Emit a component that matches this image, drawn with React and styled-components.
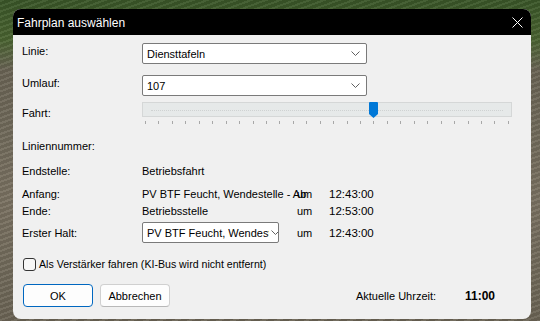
import React from "react";
import styled, { createGlobalStyle } from "styled-components";

const Global = createGlobalStyle`
  html, body { margin: 0; padding: 0; }
  body {
    width: 540px;
    height: 321px;
    overflow: hidden;
    font-family: "Liberation Sans", Arial, sans-serif;
    background:
      repeating-linear-gradient(160deg, rgba(255,255,255,0.06) 0 2px, rgba(0,0,0,0.08) 2px 5px),
      linear-gradient(to bottom, #3a5628 0px, #4a6431 40px, #6a6455 70px, #7a7262 200px, #6b6455 321px);
  }
`;

const Dialog = styled.div`
  margin: 9px 0 0 13px;
  width: 518px;
  height: 310px;
  border-radius: 8px;
  overflow: hidden;
  background: #f0f0f0;
  display: flex;
  flex-direction: column;
  color: #000;
  font-size: 11px;
`;

const TitleBar = styled.div`
  height: 26px;
  background: #000;
  display: flex;
  align-items: center;
  justify-content: space-between;
  padding: 0 8px 0 4px;
  flex-shrink: 0;
`;

const Title = styled.span`
  color: #fff;
  font-size: 12px;
  line-height: 26px;
  padding-top: 1px;
`;

const Body = styled.div`
  padding: 8px 9px 0 9px;
  display: flex;
  flex-direction: column;
`;

const Row = styled.div`
  display: flex;
  align-items: ${(p) => p.$align || "center"};
  margin-top: ${(p) => p.$mt || 0}px;
  height: ${(p) => (p.$h ? `${p.$h}px` : "auto")};
`;

const Label = styled.div`
  width: 120px;
  flex-shrink: 0;
  line-height: 14px;
  padding-top: ${(p) => p.$pt || 0}px;
  white-space: nowrap;
`;

const Combo = styled.div`
  width: ${(p) => p.$w}px;
  height: 21px;
  box-sizing: border-box;
  border: 1px solid #7a7a7a;
  border-radius: 2px;
  background: #fff;
  display: flex;
  align-items: center;
  padding: 0 0 0 4px;
  font-size: 11px;
  overflow: hidden;
`;

const ComboText = styled.span`
  flex: 1;
  white-space: nowrap;
  overflow: hidden;
  padding-top: 1px;
`;

const Chevron = styled.svg`
  flex-shrink: 0;
  margin: 0 ${(p) => p.$mr}px 0 2px;
`;

const SliderWrap = styled.div`
  width: 370px;
  display: flex;
  flex-direction: column;
  position: relative;
`;

const Track = styled.div`
  height: 15px;
  box-sizing: border-box;
  border: 1px solid #d5d7d7;
  background: #e6e9e9;
  display: flex;
  align-items: center;
  padding: 0 8px;
`;

const DotLine = styled.div`
  flex: 1;
  border-top: 1px dotted #cfd2d2;
  margin-top: 2px;
`;

const Thumb = styled.svg`
  position: absolute;
  top: 0;
  left: 227px;
`;

const Ticks = styled.div`
  display: flex;
  justify-content: space-between;
  padding: 0 3px 0 3px;
  margin-top: 4px;
  height: 3px;
`;

const Tick = styled.span`
  width: 1px;
  height: 3px;
  background: #a8a8a8;
`;

const Value = styled.div`
  width: 155px;
  flex-shrink: 0;
  line-height: 14px;
  white-space: nowrap;
`;

const Clip = styled.span`
  display: block;
  width: 165px;
  overflow: hidden;
  white-space: nowrap;
`;

const Um = styled.div`
  width: 32px;
  flex-shrink: 0;
  line-height: 14px;
  position: relative;
`;

const Time = styled.div`
  line-height: 14px;
  font-size: 11.5px;
`;

const CheckRow = styled.label`
  display: flex;
  align-items: center;
  gap: 3px;
  margin-top: ${(p) => p.$mt}px;
  margin-left: 1px;
  height: 14px;
  font-size: 10.6px;
`;

const Box = styled.span`
  width: 13px;
  height: 13px;
  box-sizing: border-box;
  border: 1px solid #333;
  border-radius: 3px;
  background: #f7f7f7;
`;

const Footer = styled.div`
  display: flex;
  align-items: center;
  margin-top: 13px;
  padding-left: 1px;
`;

const Button = styled.div`
  width: 70px;
  height: 23px;
  box-sizing: border-box;
  border: 1px solid ${(p) => (p.$primary ? "#0067c0" : "#d0d0d0")};
  border-bottom-color: ${(p) => (p.$primary ? "#0067c0" : "#b8b8b8")};
  border-radius: 4px;
  background: #fdfdfd;
  display: flex;
  align-items: center;
  justify-content: center;
  font-size: 11px;
  margin-right: 7px;
  padding-top: 1px;
`;

const Clock = styled.div`
  margin-left: auto;
  display: flex;
  align-items: center;
`;

const ClockLabel = styled.span`
  width: 109px;
`;

const ClockValue = styled.span`
  font-weight: bold;
  font-size: 12px;
  margin-right: 27px;
`;

const ChevronIcon = ({ mr = 6 }) => (
  <Chevron $mr={mr} width="9" height="5" viewBox="0 0 9 5">
    <path d="M0.5 0.5 L4.5 4.5 L8.5 0.5" fill="none" stroke="#606060" strokeWidth="1" />
  </Chevron>
);

export default function App() {
  const ticks = Array.from({ length: 28 });
  return (
    <>
      <Global />
      <Dialog>
        <TitleBar>
          <Title>Fahrplan auswählen</Title>
          <svg width="11" height="11" viewBox="0 0 11 11">
            <path d="M0.5 0.5 L10.5 10.5 M10.5 0.5 L0.5 10.5" stroke="#fff" strokeWidth="1" />
          </svg>
        </TitleBar>
        <Body>
          <Row $align="flex-start" $h={21}>
            <Label $pt={1}>Linie:</Label>
            <Combo $w={225}>
              <ComboText>Diensttafeln</ComboText>
              <ChevronIcon />
            </Combo>
          </Row>
          <Row $align="flex-start" $h={21} $mt={11}>
            <Label $pt={1}>Umlauf:</Label>
            <Combo $w={225}>
              <ComboText>107</ComboText>
              <ChevronIcon />
            </Combo>
          </Row>
          <Row $align="flex-start" $mt={6}>
            <Label $pt={4}>Fahrt:</Label>
            <SliderWrap>
              <Track>
                <DotLine />
              </Track>
              <Thumb width="9" height="16" viewBox="0 0 9 16">
                <path d="M0 1 Q0 0 1 0 L8 0 Q9 0 9 1 L9 12 L4.5 16 L0 12 Z" fill="#0078d7" />
              </Thumb>
              <Ticks>
                {ticks.map((_, i) => (
                  <Tick key={i} />
                ))}
              </Ticks>
            </SliderWrap>
          </Row>
          <Row $mt={15}>
            <Label>Liniennummer:</Label>
          </Row>
          <Row $mt={11}>
            <Label>Endstelle:</Label>
            <Value>Betriebsfahrt</Value>
          </Row>
          <Row $mt={9}>
            <Label>Anfang:</Label>
            <Value>
              <Clip>PV BTF Feucht, Wendestelle - Abfahrt</Clip>
            </Value>
            <Um>um</Um>
            <Time>12:43:00</Time>
          </Row>
          <Row $mt={3}>
            <Label>Ende:</Label>
            <Value>Betriebsstelle</Value>
            <Um>um</Um>
            <Time>12:53:00</Time>
          </Row>
          <Row $mt={4}>
            <Label>Erster Halt:</Label>
            <Value>
              <Combo $w={137}>
                <ComboText>PV BTF Feucht, Wendestelle</ComboText>
                <ChevronIcon mr={-2} />
              </Combo>
            </Value>
            <Um>um</Um>
            <Time>12:43:00</Time>
          </Row>
          <CheckRow $mt={14}>
            <Box />
            <span>Als Verstärker fahren (KI-Bus wird nicht entfernt)</span>
          </CheckRow>
          <Footer>
            <Button $primary>OK</Button>
            <Button>Abbrechen</Button>
            <Clock>
              <ClockLabel>Aktuelle Uhrzeit:</ClockLabel>
              <ClockValue>11:00</ClockValue>
            </Clock>
          </Footer>
        </Body>
      </Dialog>
    </>
  );
}
